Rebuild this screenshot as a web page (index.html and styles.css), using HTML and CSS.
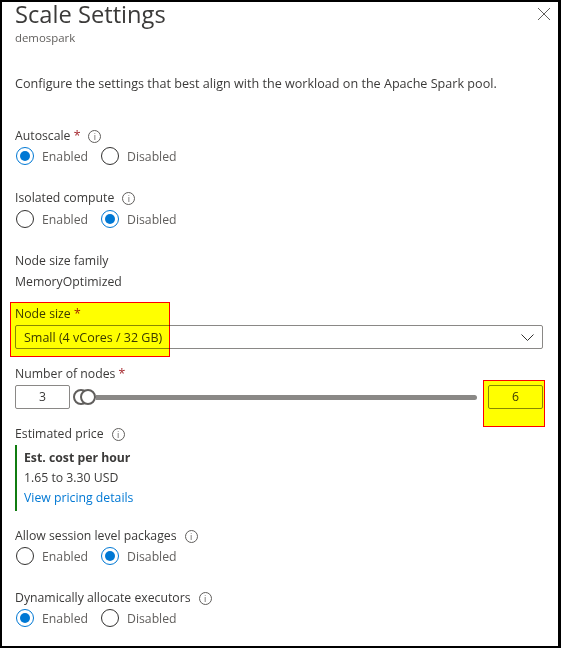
FILE: index.html
```html
<!DOCTYPE html>
<html lang="en">
<head>
    <meta charset="UTF-8">
    <title>Scale Settings</title>
    <link rel="stylesheet" href="styles.css">
</head>
<body>
    <div class="panel">
        <button class="close" type="button" aria-label="Close">
            <svg width="12" height="12" viewBox="0 0 12 12"><path d="M0 0l12 12M12 0L0 12" stroke="#605e5c" stroke-width="1" fill="none"/></svg>
        </button>
        <h1>Scale Settings</h1>
        <div class="subtitle">demospark</div>
        <p class="intro">Configure the settings that best align with the workload on the Apache Spark pool.</p>

        <div class="field autoscale">
            <div class="label">Autoscale <span class="req">*</span><span class="info">i</span></div>
            <div class="radios">
                <span class="radio on"></span><span class="radio-text">Enabled</span>
                <span class="radio"></span><span class="radio-text">Disabled</span>
            </div>
        </div>

        <div class="field isolated">
            <div class="label">Isolated compute<span class="info">i</span></div>
            <div class="radios">
                <span class="radio"></span><span class="radio-text">Enabled</span>
                <span class="radio on"></span><span class="radio-text">Disabled</span>
            </div>
        </div>

        <div class="family">
            <div class="label">Node size family</div>
            <div class="label">MemoryOptimized</div>
        </div>

        <div class="node-size">
            <div class="label">Node size <span class="req">*</span></div>
            <div class="select">
                <span>Small (4 vCores / 32 GB)</span>
                <svg width="13" height="7" viewBox="0 0 13 7"><path d="M0.5 0.5l6 6 6-6" stroke="#323130" stroke-width="1" fill="none"/></svg>
            </div>
        </div>

        <div class="nodes">
            <div class="label">Number of nodes <span class="req">*</span></div>
            <div class="slider-row">
                <div class="num-box">3</div>
                <div class="slider">
                    <span class="thumb back"></span>
                    <span class="thumb"></span>
                    <span class="track"></span>
                </div>
                <div class="num-box">6</div>
            </div>
        </div>

        <div class="price">
            <div class="label">Estimated price<span class="info">i</span></div>
            <div class="price-box">
                <div class="label bold">Est. cost per hour</div>
                <div class="label">1.65 to 3.30 USD</div>
                <a class="link" href="#">View pricing details</a>
            </div>
        </div>

        <div class="field">
            <div class="label">Allow session level packages<span class="info">i</span></div>
            <div class="radios">
                <span class="radio"></span><span class="radio-text">Enabled</span>
                <span class="radio on"></span><span class="radio-text">Disabled</span>
            </div>
        </div>

        <div class="field">
            <div class="label">Dynamically allocate executors<span class="info">i</span></div>
            <div class="radios">
                <span class="radio on"></span><span class="radio-text">Enabled</span>
                <span class="radio"></span><span class="radio-text">Disabled</span>
            </div>
        </div>

        <!-- yellow annotation boxes drawn over the screenshot -->
        <div class="mark mark-size"></div>
        <div class="mark mark-max"></div>
    </div>
</body>
</html>
```

FILE: styles.css
```css
html, body {
    margin: 0;
    padding: 0;
}
body {
    font-family: 'Open Sans', 'Noto Sans', Arial, sans-serif;
    font-size: 12.25px;
    color: #3b3a39;
    background: #fff;
}
.panel {
    position: relative;
    box-sizing: border-box;
    width: 561px;
    height: 648px;
    padding: 0 15px 0 13px;
    border-top: 2px solid #000;
    border-left: 2px solid #000;
    border-right: 3px solid #000;
    border-bottom: 2px solid #000;
}
.close {
    position: absolute;
    top: 6px;
    right: 8px;
    padding: 0;
    border: none;
    background: none;
    line-height: 0;
}
h1 {
    margin: 0;
    font-size: 23.7px;
    font-weight: 400;
    line-height: 24px;
}
.subtitle {
    margin-top: 3px;
    font-size: 11.4px;
    line-height: 18px;
    color: #605e5c;
}
.intro {
    margin: 27px 0 0 0;
    font-size: 12.6px;
    line-height: 20px;
}
.label {
    line-height: 20px;
}
.bold {
    font-weight: 700;
}
.req {
    color: #a4262c;
}
.info {
    display: inline-block;
    box-sizing: border-box;
    width: 13px;
    height: 13px;
    margin-left: 8px;
    border: 1px solid #605e5c;
    border-radius: 50%;
    font-size: 9px;
    line-height: 11px;
    text-align: center;
    color: #605e5c;
    vertical-align: 0;
}
.field {
    margin-bottom: 22px;
}
.autoscale {
    margin-top: 32px;
}
.radios {
    display: flex;
    align-items: center;
    height: 20px;
}
.isolated .radios {
    margin-top: 1px;
}
.radio {
    position: relative;
    box-sizing: border-box;
    width: 18px;
    height: 18px;
    margin-left: 1px;
    border: 1px solid #323130;
    border-radius: 50%;
}
.radio.on {
    border-color: #0078d4;
}
.radio.on::after {
    content: "";
    position: absolute;
    top: 3px;
    left: 3px;
    width: 10px;
    height: 10px;
    border-radius: 50%;
    background: #0078d4;
}
.radio-text {
    margin-left: 8px;
    width: 58px;
    color: #605e5c;
}
.family {
    margin-bottom: 12px;
}
.family .label + .label {
    margin-top: 1px;
}
.select {
    display: flex;
    align-items: center;
    justify-content: space-between;
    box-sizing: border-box;
    height: 24px;
    margin-top: 1px;
    padding: 0 8px 0 8px;
    border: 1px solid #8a8886;
    border-radius: 2px;
    font-size: 12.5px;
}
.nodes {
    margin-top: 15px;
}
.slider-row {
    display: flex;
    align-items: center;
    margin-top: 1px;
}
.num-box {
    box-sizing: border-box;
    width: 55px;
    height: 24px;
    border: 1px solid #8a8886;
    border-radius: 2px;
    line-height: 22px;
    text-align: center;
}
.slider {
    flex: 1;
    display: flex;
    align-items: center;
    margin: 0 11px 0 3px;
}
.thumb {
    box-sizing: border-box;
    flex: none;
    width: 16px;
    height: 16px;
    border: 2px solid #605e5c;
    border-radius: 50%;
    background: #fff;
}
.thumb.back {
    margin-right: -9px;
}
.track {
    flex: 1;
    height: 5px;
    border-radius: 0 3px 3px 0;
    background: #8a8886;
}
.price {
    margin-top: 15px;
}
.price-box {
    box-sizing: border-box;
    height: 66px;
    margin: 1px 0 15px 0;
    padding: 3px 0 0 7px;
    border-left: 2px solid #107c10;
}
.link {
    display: block;
    line-height: 20px;
    color: #0078d4;
    text-decoration: none;
}
.mark {
    position: absolute;
    box-sizing: border-box;
    border: 1px solid #f00;
    background: #ff0;
    mix-blend-mode: multiply;
}
.mark-size {
    left: 8px;
    top: 300px;
    width: 160px;
    height: 55px;
}
.mark-max {
    left: 481px;
    top: 378px;
    width: 62px;
    height: 47px;
}
```
